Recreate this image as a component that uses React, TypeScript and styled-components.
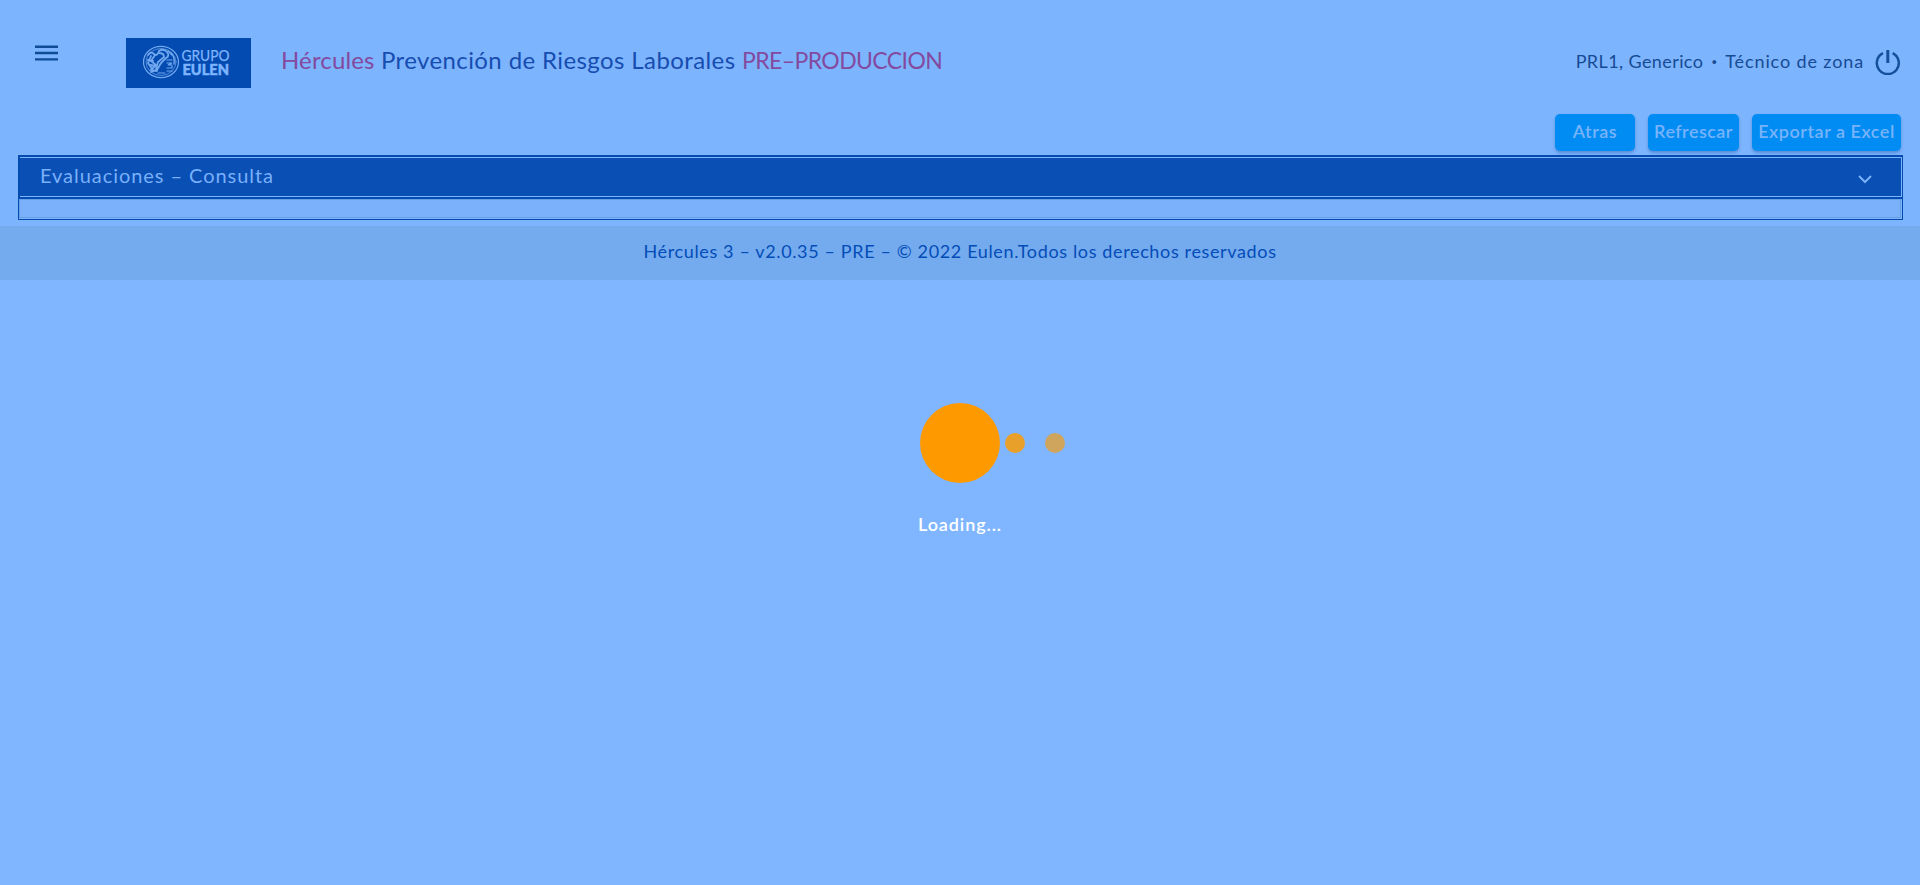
import React from 'react';
import styled, { createGlobalStyle } from 'styled-components';

const Global = createGlobalStyle`
  * { box-sizing: border-box; }
  body { margin: 0; background: #80b6ff; font-family: Lato, 'Open Sans', sans-serif; }
`;

const Page = styled.div`
  position: relative;
  height: 885px;
  background: #80b6ff;
  overflow: hidden;
`;

const Shell = styled.div`
  height: 226px;
  background: #7db4fe;
  overflow: hidden;
`;

const Header = styled.header`
  height: 114px;
  display: flex;
  align-items: flex-start;
  padding: 38px 19px 0 35px;
`;

const MenuIcon = styled.svg`
  width: 23px;
  height: 17px;
  margin: 7px 68px 0 0;
`;

const Logo = styled.svg`
  width: 125px;
  height: 50px;
  display: block;
  background: #034bb0;
`;

const Line = styled.span<{ $size: number; $weight?: number; $gap?: number; $color: string }>`
  font-size: ${p => p.$size}px;
  font-weight: ${p => p.$weight ?? 400};
  letter-spacing: ${p => p.$gap ?? 0}px;
  color: ${p => p.$color};
  line-height: 24px;
  white-space: pre;
`;

const Title = styled.h1`
  margin: 10px 0 0 30px;
  font-size: 24px;
  line-height: 24px;
  font-weight: 400;
  flex: 1;
`;

const User = styled.div`
  display: flex;
  padding-top: 11px;
`;

const Bullet = styled.span`
  width: 22px;
  font-size: 18px;
  line-height: 24px;
  font-weight: 900;
  text-align: center;
  color: #164b94;
`;

const Power = styled.svg`
  width: 26px;
  height: 26px;
  margin: 11px 0 0 11px;
`;

const Toolbar = styled.div`
  display: flex;
  justify-content: flex-end;
  gap: 13px;
  height: 41px;
  padding-right: 19px;
`;

const Button = styled.button<{ $width: number }>`
  width: ${p => p.$width}px;
  height: 37px;
  padding: 0 0 3px;
  border: 0;
  border-radius: 5px;
  background: #008cf2;
  box-shadow: 0 2px 3px rgba(20, 70, 140, 0.35);
  font-family: inherit;
  display: flex;
  align-items: center;
  justify-content: center;
`;

const Panel = styled.section`
  margin: 0 17px 0 18px;
  height: 65px;
  border: 1px solid #034bb0;
`;

const PanelHead = styled.div`
  height: 43px;
  border: solid #034bb0;
  border-width: 1px 0 2px 1px;
  padding-bottom: 1px;
`;

const PanelBar = styled.div`
  height: 39px;
  margin-right: 1px;
  border-top: 1px solid #7db4fe;
  background: #0a4fb4;
  display: flex;
  justify-content: space-between;
  padding: 5px 29px 0 20px;
`;

const Chevron = styled.svg`
  width: 14px;
  height: 9px;
  margin-top: 12px;
`;

const PanelBody = styled.div`
  height: 19px;
  margin: 0 1px 1px 0;
  border: 1px solid #689fe4;
  background: #7ab1fa;
`;

const Footer = styled.footer`
  height: 54px;
  background: #74aaee;
  display: flex;
  justify-content: center;
  padding-top: 13px;
`;

const Loader = styled.div`
  position: absolute;
  left: 918px;
  top: 403px;
  width: 150px;
`;

const Dots = styled.div`
  display: flex;
  align-items: center;
  padding-left: 2px;
`;

const Dot = styled.span<{ $size: number; $left?: number; $color: string }>`
  width: ${p => p.$size}px;
  height: ${p => p.$size}px;
  margin-left: ${p => p.$left ?? 0}px;
  border-radius: 50%;
  background: ${p => p.$color};
`;

const Caption = styled.div`
  margin-top: 29px;
`;

export default function App() {
  return (
    <Page>
      <Global />
      <Shell>
        <Header>
          <MenuIcon viewBox="0 0 23 17" stroke="#0f4c98" strokeWidth="2.4">
            <path d="M0 1.7h23M0 8h23M0 14.4h23" />
          </MenuIcon>
          <Logo viewBox="0 0 125 50">
            <g fill="none" stroke="#72a8ef" strokeLinecap="round">
              <ellipse cx="35" cy="24" rx="17.5" ry="15.6" strokeWidth="1.2" />
              <ellipse cx="35" cy="24" rx="15" ry="13.5" strokeWidth=".7" />
              <path d="M22 17q3-4 6-1t5-3q5-3 8 1t-1 6l-5 5-4 7-6 2M25 18l-3 7 4 6M29 17l-4 6 5 4-5 5 6 1M33 15q5 0 5 4l-6 5-2 7M22 22l5 1M24 27l6 1" strokeWidth="1.8" />
              <path d="M45 15q4 4 3 11M42 13l4 4" strokeWidth="1.4" />
              <path d="M41 22h5M41 25h5l-4 2h4M41 30h5v-2M41 33h5M32 35h7" strokeWidth="1.2" />
            </g>
            <g fill="#7db4fe" fontFamily="Lato, sans-serif">
              <text x="55.5" y="22.6" fontSize="15.5" fontWeight="400" textLength="48" lengthAdjust="spacingAndGlyphs" stroke="#7db4fe" strokeWidth=".25">GRUPO</text>
              <text x="56.5" y="36.9" fontSize="15" fontWeight="900" textLength="46.5" lengthAdjust="spacingAndGlyphs" stroke="#7db4fe" strokeWidth=".5">EULEN</text>
            </g>
          </Logo>
          <Title>
            <Line $size={24} $gap={0.15} $color="#834a9f">Hércules </Line>
            <Line $size={24} $gap={0.4} $color="#174db0">Prevención de Riesgos Laborales </Line>
            <Line $size={23} $gap={-0.6} $color="#834a9f">PRE–PRODUCCION</Line>
          </Title>
          <User>
            <Line $size={18} $gap={0.4} $color="#164b94">PRL1, Generico</Line>
            <Bullet>·</Bullet>
            <Line $size={18} $gap={0.88} $color="#164b94">Técnico de zona</Line>
          </User>
          <Power viewBox="0 0 26 26" fill="none" stroke="#15509c" strokeWidth="2.5">
            <path d="M8 4.2A11 11 0 1 0 17.6 4.2" />
            <path d="M12.8 1v13" strokeWidth="3" />
          </Power>
        </Header>
        <Toolbar>
          <Button $width={80}><Line $size={18} $weight={600} $gap={0.55} $color="#79b3fb">Atras</Line></Button>
          <Button $width={91}><Line $size={18} $weight={600} $gap={0.45} $color="#79b3fb">Refrescar</Line></Button>
          <Button $width={149}><Line $size={18} $weight={600} $gap={0.53} $color="#79b3fb">Exportar a Excel</Line></Button>
        </Toolbar>
        <Panel>
          <PanelHead>
            <PanelBar>
              <Line $size={20} $gap={0.95} $color="#79b0fa">Evaluaciones – Consulta</Line>
              <Chevron viewBox="0 0 14 9" fill="none" stroke="#79b0fa" strokeWidth="2"><path d="M1 1l6 6 6-6" /></Chevron>
            </PanelBar>
          </PanelHead>
          <PanelBody />
        </Panel>
      </Shell>
      <Footer><Line $size={18} $gap={0.635} $color="#034db8">Hércules 3 – v2.0.35 – PRE – © 2022 Eulen.Todos los derechos reservados</Line></Footer>
      <Loader>
        <Dots>
          <Dot $size={80} $color="#ff9900" />
          <Dot $size={20} $left={5} $color="#e9a02b" />
          <Dot $size={20} $left={20} $color="#cfa55e" />
        </Dots>
        <Caption><Line $size={18} $weight={600} $gap={0.9} $color="#ffffff">Loading...</Line></Caption>
      </Loader>
    </Page>
  );
}
